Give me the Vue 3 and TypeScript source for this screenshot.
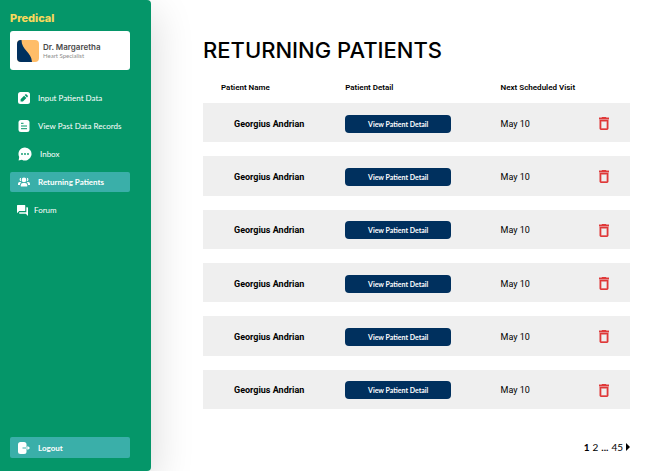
<script setup lang="ts">
import { ref } from 'vue'

interface NavItem {
  label: string
  icon: 'edit' | 'records' | 'inbox' | 'people' | 'forum'
}

interface Visit {
  id: number
  name: string
  date: string
}

const navItems: NavItem[] = [
  { label: 'Input Patient Data', icon: 'edit' },
  { label: 'View Past Data Records', icon: 'records' },
  { label: 'Inbox', icon: 'inbox' },
  { label: 'Returning Patients', icon: 'people' },
  { label: 'Forum', icon: 'forum' },
]

const active = ref('Returning Patients')

const visits = ref<Visit[]>(
  Array.from({ length: 6 }, (_, i) => ({ id: i + 1, name: 'Georgius Andrian', date: 'May 10' })),
)

function removeVisit(id: number) {
  visits.value = visits.value.filter((v) => v.id !== id)
}
</script>

<template>
  <div class="page">
    <aside class="sidebar">
      <div class="brand">Predical</div>

      <div class="profile">
        <svg class="avatar" viewBox="0 0 22 22" aria-hidden="true">
          <rect width="22" height="22" rx="4" fill="#ffbd69" />
          <path d="M4 0H4.500C4.500 10 14.500 12 15 22H4a4 4 0 0 1-4-4V4a4 4 0 0 1 4-4Z" fill="#00305e" />
        </svg>
        <div class="who">
          <div class="doctor">Dr. Margaretha</div>
          <div class="role">Heart Specialist</div>
        </div>
      </div>

      <nav class="nav">
        <a
          v-for="item in navItems"
          :key="item.label"
          href="#"
          class="item"
          :class="[item.icon, { active: active === item.label }]"
          @click.prevent="active = item.label"
        >
          <svg v-if="item.icon === 'edit'" class="icon" viewBox="0 0 12 12" aria-hidden="true">
            <rect width="12" height="12" rx="2.500" fill="#fff" />
            <path d="M2.600 9.500V7.200L6.100 3.700 8.400 6 4.900 9.500ZM6.700 3.100 7.500 2.300Q7.900 2 8.300 2.300L9.800 3.800Q10.100 4.200 9.800 4.600L9 5.400Z" fill="#059669" />
          </svg>
          <svg v-else-if="item.icon === 'records'" class="icon" viewBox="0 0 12 12" aria-hidden="true">
            <rect x=".5" width="11" height="12" rx="2.500" fill="#fff" />
            <path d="M3 3.300H5.500M3 6H9M3 8.700H9" stroke="#059669" stroke-width="1" />
          </svg>
          <svg v-else-if="item.icon === 'inbox'" class="icon" viewBox="0 0 14 14" aria-hidden="true">
            <path d="M7 .5a6.500 6.500 0 1 1-3.100 12.200L.6 13.500 1.200 10A6.500 6.500 0 0 1 7 .5Z" fill="#fff" />
            <circle cx="4" cy="7" r=".9" fill="#059669" />
            <circle cx="7" cy="7" r=".9" fill="#059669" />
            <circle cx="10" cy="7" r=".9" fill="#059669" />
          </svg>
          <svg v-else-if="item.icon === 'people'" class="icon" viewBox="0 0 12 10" fill="#fff" aria-hidden="true">
            <circle cx="6" cy="2.900" r="2.300" />
            <path d="M2.800 9.600V8.300Q2.800 6.100 5 6.100H7Q9.200 6.100 9.200 8.300V9.600Z" />
            <path d="M3.200.8A1.700 1.700 0 1 0 3.300 4.200 3.500 3.500 0 0 1 3.200.8ZM8.800.8A1.700 1.700 0 1 1 8.700 4.200 3.500 3.500 0 0 0 8.800.8ZM0 8V6.700Q0 5.100 1.600 5.100H3.300Q2 6 2 8ZM12 8V6.700Q12 5.100 10.400 5.100H8.700Q10 6 10 8Z" />
          </svg>
          <svg v-else class="icon" viewBox="2 2 20 20" fill="#fff" aria-hidden="true">
            <path d="M21 6h-2v9H6v2c0 .55.45 1 1 1h11l4 4V7c0-.55-.45-1-1-1zm-4 6V3c0-.55-.45-1-1-1H3c-.55 0-1 .45-1 1v14l4-4h10c.55 0 1-.45 1-1z" />
          </svg>
          <span>{{ item.label }}</span>
        </a>
      </nav>

      <button type="button" class="logout">
        <svg class="icon" viewBox="0 0 12 12" aria-hidden="true">
          <rect width="8.500" height="12" rx="2.500" fill="#fff" />
          <path d="M4.500 6H8.500" stroke="#3aafa9" stroke-width="1" />
          <path d="M8 5.500H9.500V3.700L12 6 9.500 8.300V6.500H8Z" fill="#fff" />
        </svg>
        <span>Logout</span>
      </button>
    </aside>

    <main class="content">
      <h1>RETURNING PATIENTS</h1>

      <table>
        <colgroup>
          <col class="col-name" />
          <col class="col-detail" />
          <col class="col-date" />
          <col class="col-action" />
        </colgroup>
        <thead>
          <tr>
            <th scope="col" class="name-head">Patient Name</th>
            <th scope="col">Patient Detail</th>
            <th scope="col" colspan="2">Next Scheduled Visit</th>
          </tr>
        </thead>
        <tbody>
          <tr v-for="visit in visits" :key="visit.id">
            <td class="name">{{ visit.name }}</td>
            <td><button type="button" class="detail">View Patient Detail</button></td>
            <td class="date">{{ visit.date }}</td>
            <td>
              <button type="button" class="remove" aria-label="Delete" @click="removeVisit(visit.id)">
                <svg viewBox="5 3 14 18" fill="#e03a3a" stroke="#e03a3a" stroke-width=".5" aria-hidden="true">
                  <path d="M6 19c0 1.100.9 2 2 2h8c1.100 0 2-.9 2-2V7H6v12zM8 9h8v10H8V9zm7.500-5-1-1h-5l-1 1H5v2h14V4z" />
                </svg>
              </button>
            </td>
          </tr>
        </tbody>
      </table>

      <nav class="pager" aria-label="Pages">
        <a href="#" class="current" @click.prevent>1</a>
        <a href="#" @click.prevent>2</a>
        <b>...</b>
        <a href="#" @click.prevent>45</a>
        <a href="#" aria-label="Next" @click.prevent>
          <svg viewBox="0 0 4 8" aria-hidden="true"><path d="M0 0 4 4 0 8Z" /></svg>
        </a>
      </nav>
    </main>
  </div>
</template>

<style>
body {
  background: #fff;
}
</style>

<style scoped>
* {
  box-sizing: border-box;
}

.page {
  display: flex;
  min-height: 100vh;
  font-family: Inter, "Liberation Sans", sans-serif;
  color: #000;
}

button {
  border: 0;
  font: inherit;
  cursor: pointer;
}

a {
  color: inherit;
  text-decoration: none;
}

svg {
  display: block;
}

.sidebar {
  display: flex;
  flex-direction: column;
  flex: 0 0 151px;
  padding: 11px 21px 13px 10px;
  background: #059669;
  border-radius: 0 4px 4px 0;
  box-shadow: 4px 12px 40px rgba(0, 0, 0, 0.14);
  color: #fff;
}

.brand {
  font-size: 11px;
  font-weight: 800;
  line-height: 14px;
  color: #f8d85c;
}

.profile {
  display: flex;
  align-items: center;
  gap: 4px;
  height: 39px;
  margin-top: 6px;
  padding: 0 7px;
  background: #fff;
  border-radius: 3px;
}

.avatar {
  width: 22px;
  height: 22px;
}

.doctor {
  font-size: 8px;
  font-weight: 600;
  line-height: 10px;
  color: #4a4a4a;
}

.role {
  font-family: Lato, sans-serif;
  font-size: 6px;
  line-height: 8px;
  color: #8c8c8c;
}

.nav {
  display: flex;
  flex-direction: column;
  gap: 8px;
  margin-top: 18px;
}

.item,
.logout {
  display: flex;
  align-items: center;
  gap: 8px;
  height: 20px;
  padding: 0 8px;
  border-radius: 2px;
  font-family: Lato, sans-serif;
  font-size: 8px;
  line-height: 10px;
  white-space: nowrap;
}

.icon {
  width: 12px;
  height: 12px;
}

.inbox .icon {
  width: 14px;
  height: 14px;
}

.forum {
  gap: 6px;
  padding: 0 7px;
}

.forum .icon {
  width: 11px;
  height: 11px;
}

.active {
  background: #3aafa9;
  font-weight: 700;
}

.logout {
  height: 21px;
  margin-top: auto;
  background: #3aafa9;
  color: #fff;
  font-weight: 700;
}

.content {
  display: flex;
  flex-direction: column;
  flex: 1;
  min-width: 0;
  padding: 36px 32px 18px 52px;
}

h1 {
  margin: 0;
  font-size: 22px;
  font-weight: 500;
  line-height: 28px;
}

table {
  flex: 1;
  width: 100%;
  height: 350px;
  margin-top: 9px;
  border-spacing: 0;
  table-layout: fixed;
}

.col-name {
  width: 33.3%;
}

.col-detail {
  width: 36.4%;
}

.col-date {
  width: 23%;
}

th {
  height: 30px;
  padding: 0;
  font-family: Roboto, sans-serif;
  font-size: 8px;
  font-weight: 600;
  line-height: 10px;
  text-align: left;
}

th.name-head {
  padding-left: 18px;
}

td {
  padding: 2px 0 0;
  background: #efefef;
  background-clip: padding-box;
  border-bottom: 14px solid transparent;
  vertical-align: middle;
}

.name {
  padding-left: 31px;
  font-family: Roboto, sans-serif;
  font-size: 9px;
  font-weight: 700;
}

.date {
  font-family: Roboto, sans-serif;
  font-size: 9px;
}

.detail {
  display: block;
  width: 106px;
  height: 18px;
  padding: 0;
  background: #00305e;
  border-radius: 4px;
  color: #fff;
  font-family: Lato, sans-serif;
  font-size: 7px;
  font-weight: 700;
}

.remove {
  display: block;
  padding: 0;
  background: none;
}

.remove svg {
  width: 10px;
  height: 13px;
}

.pager {
  display: flex;
  align-items: center;
  justify-content: flex-end;
  gap: 3px;
  margin-top: 18px;
  font-family: Lato, sans-serif;
  font-size: 10px;
  line-height: 12px;
}

.current {
  font-weight: 700;
}

.pager svg {
  width: 4px;
  height: 8px;
}
</style>
